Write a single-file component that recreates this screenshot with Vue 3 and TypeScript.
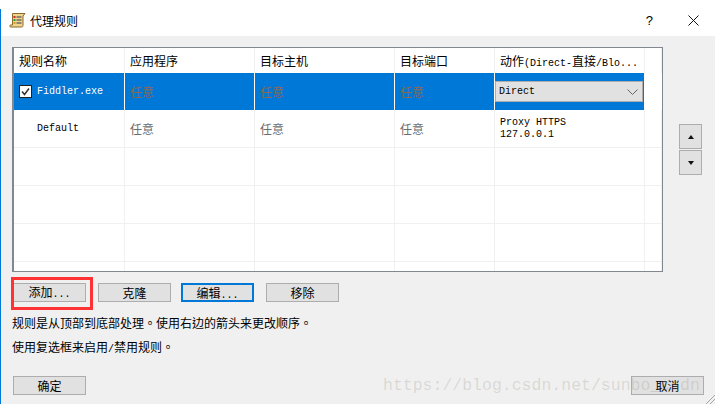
<script setup lang="ts">
const widths = [111, 130, 140, 100, 150, 17]
const headers = ['规则名称', '应用程序', '目标主机', '目标端口']
const emptyRows = [0, 1, 2, 3]
</script>

<template>
  <div class="window">
    <header class="titlebar">
      <svg class="app-icon" width="17" height="17" viewBox="0 0 17 17">
        <path d="M3.5 1.5h12.5l-2 2.5v9.5c0 1-.7 1.5-1.5 1.5H1.5c-1 0-1-2 0-2h2z" fill="#efd48c" stroke="#8a6a30" />
        <rect x="4.5" y="4" width="2" height="2" fill="#d02020" />
        <rect x="4.5" y="7" width="2" height="2" fill="#20a040" />
        <rect x="4.5" y="10" width="2" height="2" fill="#d0a020" />
        <path d="M7.5 5h5M7.5 8h5M7.5 11h5" stroke="#335" />
      </svg>
      <span class="title">代理规则</span>
      <span class="help">?</span>
      <svg class="close" width="11" height="11" viewBox="0 0 11 11">
        <path d="M.5.5l10 10M10.5.5l-10 10" stroke="#111" fill="none" />
      </svg>
    </header>

    <main class="body">
      <div class="grid-row">
        <section class="grid">
          <div class="row header">
            <div v-for="(h, i) in headers" :key="i" class="cell" :style="{ width: widths[i] + 'px' }">{{ h }}</div>
            <div class="cell" :style="{ width: widths[4] + 'px' }">
              <span>动作<span class="mono">(Direct-</span>直接<span class="mono">/Blo...</span></span>
            </div>
            <div class="cell" :style="{ width: widths[5] + 'px' }"></div>
          </div>
          <div class="row selected">
            <div class="cell name blue" :style="{ width: widths[0] + 'px' }">
              <span class="check">
                <svg width="11" height="11" viewBox="0 0 11 11">
                  <path d="M2 5.5l2.5 3 4.5-6" stroke="#333" stroke-width="1.5" fill="none" />
                </svg>
              </span>
              <span class="mono">Fiddler.exe</span>
            </div>
            <div class="cell any blue" :style="{ width: widths[1] + 'px' }">任意</div>
            <div class="cell any blue" :style="{ width: widths[2] + 'px' }">任意</div>
            <div class="cell any blue" :style="{ width: widths[3] + 'px' }">任意</div>
            <div class="cell combo-cell blue" :style="{ width: widths[4] - 1 + 'px' }">
              <div class="combo">
                <span class="mono">Direct</span>
                <svg width="11" height="6" viewBox="0 0 11 6">
                  <path d="M.5.5l5 5 5-5" stroke="#666" fill="none" />
                </svg>
              </div>
            </div>
          </div>
          <div class="row tall">
            <div class="cell name" :style="{ width: widths[0] + 'px' }">
              <span class="check-space"></span>
              <span class="mono">Default</span>
            </div>
            <div class="cell any" :style="{ width: widths[1] + 'px' }">任意</div>
            <div class="cell any" :style="{ width: widths[2] + 'px' }">任意</div>
            <div class="cell any" :style="{ width: widths[3] + 'px' }">任意</div>
            <div class="cell mono action" :style="{ width: widths[4] + 'px' }">Proxy HTTPS<br />127.0.0.1</div>
            <div class="cell" :style="{ width: widths[5] + 'px' }"></div>
          </div>
          <div v-for="r in emptyRows" :key="r" class="row tall">
            <div v-for="(w, i) in widths" :key="i" class="cell" :style="{ width: w + 'px' }"></div>
          </div>
        </section>
        <div class="arrows">
          <button class="arrow" type="button"><span class="tri up"></span></button>
          <button class="arrow" type="button"><span class="tri down"></span></button>
        </div>
      </div>

      <div class="actions">
        <button class="btn add" type="button">添加<span class="mono dots">...</span></button>
        <button class="btn" type="button">克隆</button>
        <button class="btn focus" type="button">编辑<span class="mono dots">...</span></button>
        <button class="btn" type="button">移除</button>
      </div>
      <p class="hint first">规则是从顶部到底部处理。使用右边的箭头来更改顺序。</p>
      <p class="hint second">使用复选框来启用<span class="mono slash">/</span>禁用规则。</p>
      <footer class="footer">
        <button class="btn" type="button">确定</button>
        <button class="btn" type="button">取消</button>
      </footer>
    </main>
    <span class="watermark">https://blog.csdn.net/sunbo_csdn</span>
    <svg class="grip" width="9" height="9" viewBox="0 0 9 9">
      <path d="M9 0L0 9M9 4L4 9" stroke="#a8a8a8" fill="none" />
    </svg>
  </div>
</template>

<style>
html, body { margin: 0; background: #f0f0f0; overflow: hidden; }
</style>

<style scoped>
.window {
  position: relative;
  width: 715px;
  height: 404px;
  box-sizing: border-box;
  background: #f0f0f0;
  padding-left: 1px;
  font-family: "Noto Sans CJK SC", "Liberation Sans", sans-serif;
  font-size: 12px;
  color: #000;
  overflow: hidden;
}
.window::before {
  content: "";
  position: absolute;
  left: 0;
  top: 9px;
  bottom: 0;
  width: 1px;
  background: #0078d7;
}
.titlebar {
  height: 36px;
  margin-left: -1px;
  background: #fff;
  display: flex;
  align-items: center;
  padding: 4px 0 0 9px;
  box-sizing: border-box;
}
.app-icon { flex: none; }
.title { margin-left: 4px; font-size: 12px; }
.help { margin-left: auto; font-size: 13px; font-family: "Liberation Sans", sans-serif; }
.close { margin: 0 16px 0 35px; }
.body { padding: 11px 11px 0 11px; display: flex; flex-direction: column; }
.grid-row { display: flex; align-items: flex-start; }
.grid {
  width: 651px;
  height: 225px;
  box-sizing: border-box;
  border: 1px solid #828790;
  border-left-width: 2px;
  background: #fff;
  overflow: hidden;
  flex: none;
}
.row { display: flex; border-bottom: 1px solid #f0f0f0; box-sizing: border-box; height: 38px; }
.header { height: 25px; border-bottom: 0; }
.selected { height: 37px; border-bottom: 0; }
.blue { background: #0078d7; }
.cell {
  box-sizing: border-box;
  flex: none;
  padding-left: 5px;
  border-right: 1px solid #f0f0f0;
  display: flex;
  align-items: center;
}
.header .cell { font-size: 12px; padding-bottom: 1px; }
.selected .cell { border-right-color: #fff; }
.selected .cell.combo-cell { border-right: 0; padding-left: 0; }
.mono { font-family: "Liberation Mono", monospace; font-size: 10px; white-space: pre; }
.selected .name .mono { color: #fff; }
.check {
  width: 13px;
  height: 13px;
  box-sizing: border-box;
  border: 1px solid #222;
  background: #fff;
  display: flex;
  margin-right: 5px;
  flex: none;
}
.check svg { flex: none; }
.check-space { width: 13px; margin-right: 5px; flex: none; }
.any { color: #6d6d6d; }
.selected .any { color: #8a6a4f; }
.combo {
  width: 148px;
  height: 21px;
  box-sizing: border-box;
  background: #e1e1e1;
  border: 1px solid #adadad;
  display: flex;
  align-items: center;
  justify-content: space-between;
  padding: 0 4px 0 3px;
}
.action { line-height: 12px; display: block; padding-top: 7px; }
.arrows { margin: 77px 0 0 16px; display: flex; flex-direction: column; gap: 1px; }
.arrow {
  width: 23px;
  height: 25px;
  padding: 0;
  box-sizing: border-box;
  background: #e1e1e1;
  border: 1px solid #adadad;
  display: flex;
  align-items: center;
  justify-content: center;
}
.tri { width: 0; height: 0; border-left: 3px solid transparent; border-right: 3px solid transparent; }
.up { border-bottom: 4px solid #111; }
.down { border-top: 4px solid #111; }
.actions { display: flex; margin-top: 11px; padding-left: 1px; }
.btn {
  width: 73px;
  height: 19px;
  padding: 0;
  flex: none;
  box-sizing: border-box;
  background: #e1e1e1;
  border: 1px solid #adadad;
  font-family: "Noto Sans CJK SC", "Liberation Sans", sans-serif;
  font-size: 12px;
  line-height: 16px;
  color: #000;
  display: block;
}
.actions .btn + .btn { margin-left: 12px; }
.actions .btn.focus { margin-left: 10px; }
.add { position: relative; }
.add::after {
  content: "";
  position: absolute;
  left: -3px;
  top: -7px;
  width: 82px;
  height: 33px;
  box-sizing: border-box;
  border: 3px solid #ff3333;
}
.focus { border: 2px solid #0078d7; }
.hint { margin: 0; line-height: 16px; font-family: "Noto Sans CJK TC", "Noto Sans CJK SC", sans-serif; }
.slash { font-size: 10px; }
.first { margin-top: 13px; }
.second { margin-top: 8px; }
.footer { display: flex; justify-content: space-between; margin-top: 18px; padding-left: 1px; }
.watermark {
  position: absolute;
  left: 383px;
  top: 375px;
  font-family: "Liberation Mono", monospace;
  font-size: 16.5px;
  line-height: 22px;
  color: rgba(130, 130, 115, 0.22);
  white-space: nowrap;
  pointer-events: none;
}
.grip { position: absolute; right: 0; bottom: 0; }
</style>
